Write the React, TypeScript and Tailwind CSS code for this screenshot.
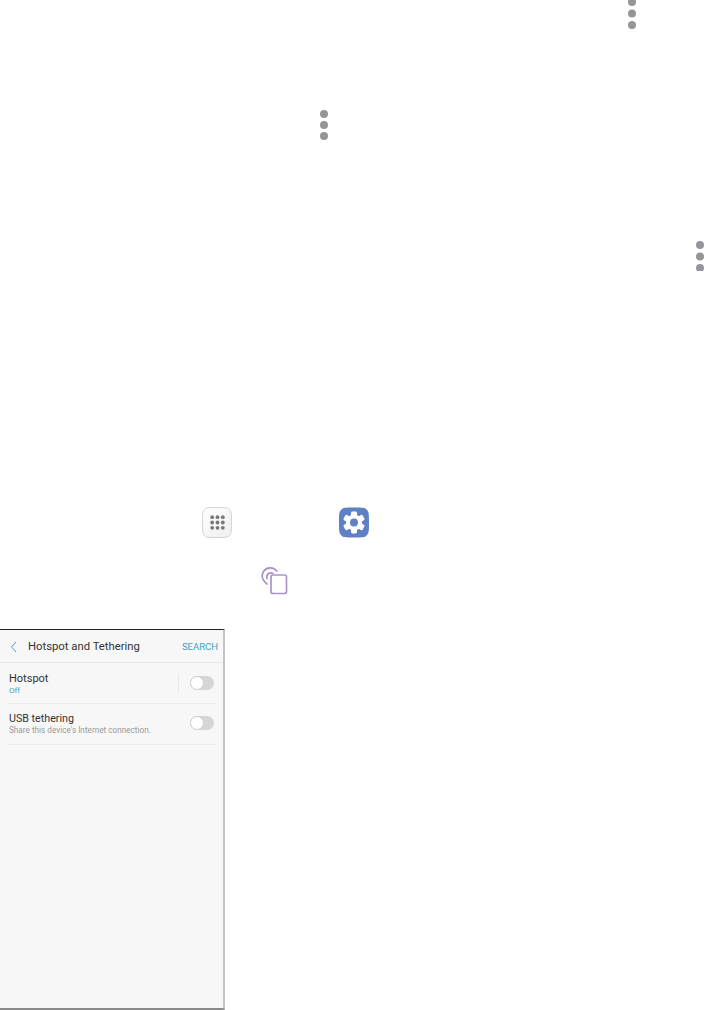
import React from "react";

const Dots = ({ cy }: { cy: number[] }) => (
  <svg width="12" height={Math.ceil(cy[2] + 5)} viewBox={`0 0 12 ${Math.ceil(cy[2] + 5)}`} className="block">
    {cy.map((y) => (
      <circle key={y} cx="6" cy={y} r="4" fill="#939598" />
    ))}
  </svg>
);

const AppsIcon = () => (
  <svg width="30" height="31" viewBox="0 0 30 31" className="block">
    <defs>
      <linearGradient id="appsBg" x1="0" y1="0" x2="1" y2="1">
        <stop offset="0" stopColor="#ffffff" />
        <stop offset="1" stopColor="#eeeeee" />
      </linearGradient>
    </defs>
    <path
      d="M15 0.5 C24 0.5 26 0.5 27.5 2.5 C29.5 4.5 29.5 7 29.5 15.5 C29.5 24 29.5 26.5 27.5 28.5 C26 30.5 24 30.5 15 30.5 C6 30.5 4 30.5 2.5 28.5 C0.5 26.5 0.5 24 0.5 15.5 C0.5 7 0.5 4.5 2.5 2.5 C4 0.5 6 0.5 15 0.5 Z"
      fill="url(#appsBg)"
      stroke="#c8c8c8"
      strokeWidth="0.8"
    />
    {[-5.3, 0, 5.3].map((y) =>
      [-5.3, 0, 5.3].map((x) => <circle key={`${x}-${y}`} cx={15.5 + x} cy={15.5 + y} r="1.9" fill="#77787b" />)
    )}
  </svg>
);

const GearIcon = () => (
  <svg width="30" height="31" viewBox="0 0 30 31" className="block">
    <path
      d="M15 0.5 C24 0.5 26 0.5 28 3 C30 5 30 8 30 15.5 C30 23 30 26 28 28 C26 30.5 24 30.5 15 30.5 C6 30.5 4 30.5 2 28 C0 26 0 23 0 15.5 C0 8 0 5 2 3 C4 0.5 6 0.5 15 0.5 Z"
      fill="#5f80c4"
    />
    <g transform="translate(15 15.5)">
      {[0, 60, 120, 180, 240, 300].map((a) => (
        <rect key={a} x="-3" y="-11" width="6" height="6" rx="1.4" fill="#ffffff" transform={`rotate(${a})`} />
      ))}
      <circle r="8" fill="#ffffff" />
      <circle r="4" fill="#5f80c4" />
    </g>
  </svg>
);

const TetherIcon = () => (
  <svg width="28" height="29" viewBox="0 0 28 29" fill="none" stroke="#a993cf" strokeWidth="1.7" className="block">
    <rect x="11" y="9" width="15.5" height="18.5" rx="2" />
    <path d="M7 18 C2.5 14.5 1 10 3.5 5.5 C6.5 1 13 0.5 17 5" strokeLinecap="round" />
    <path d="M7 12.5 C6 8.5 9.5 5.5 13 7.5" strokeLinecap="round" />
  </svg>
);

const Toggle = () => (
  <div className="relative h-[14px] w-[24px] rounded-full bg-[#d6d6d6]">
    <div className="absolute left-0 top-0 h-[14px] w-[14px] rounded-full border border-[#d0d0d0] bg-white" />
  </div>
);

export default function App() {
  return (
    <div className="flex h-[1010px] w-[707px] flex-col overflow-hidden bg-white font-['Roboto',sans-serif]">
      <div className="pl-[626px]">
        <Dots cy={[2, 13.5, 25]} />
      </div>
      <div className="mt-[79px] pl-[318px]">
        <Dots cy={[5, 16, 27]} />
      </div>
      <div className="mt-[100px] pl-[694px]">
        <svg width="12" height="30" viewBox="0 0 12 30" className="block">
          <circle cx="6" cy="4" r="4" fill="#939598" />
          <circle cx="6" cy="15.5" r="4" fill="#939598" />
          <circle cx="6" cy="27" r="4" fill="#939598" />
        </svg>
      </div>

      <div className="mt-[236px] flex items-center pl-[202px]">
        <AppsIcon />
        <div className="ml-[107px]">
          <GearIcon />
        </div>
      </div>
      <div className="mt-[28px] pl-[260px]">
        <TetherIcon />
      </div>

      <div className="mt-[34px] flex h-[381px] w-[225px] flex-col border-t border-r-2 border-b-2 border-t-[#222222] border-r-[#c4c4c4] border-b-[#8a8a8a] bg-[#f7f7f7]">
        <div className="flex h-[33px] items-center justify-between border-b border-[#e6e6e6] pt-[1px] pr-[5px] pl-[10px]">
          <div className="flex items-center">
            <svg width="8" height="12" viewBox="0 0 8 12" fill="none" stroke="#4aa8c4" strokeWidth="1" className="block">
              <path d="M6 1 L1.5 6 L6 11" />
            </svg>
            <span className="ml-[10px] text-[11.3px] leading-none text-[#333333]">Hotspot and Tethering</span>
          </div>
          <span className="text-[9.5px] leading-none text-[#3fa3c2]">SEARCH</span>
        </div>
        <div className="mx-[7px] flex h-[41px] items-center justify-between border-b border-[#ececec] pr-[2px] pl-[2px]">
          <div className="pt-[1px]">
            <div className="text-[11px] leading-[13px] text-[#333333]">Hotspot</div>
            <div className="text-[8px] leading-[11px] text-[#3fa3c2]">Off</div>
          </div>
          <div className="flex items-center">
            <div className="mr-[11px] h-[18px] w-px bg-[#e8e8e8]" />
            <Toggle />
          </div>
        </div>
        <div className="mx-[7px] flex h-[41px] items-center justify-between border-b border-[#ececec] pr-[2px] pl-[2px]">
          <div>
            <div className="text-[10.7px] leading-[13px] text-[#333333]">USB tethering</div>
            <div className="text-[8.2px] leading-[11px] text-[#9a9a9a]">Share this device's Internet connection.</div>
          </div>
          <div className="mb-[2px]">
            <Toggle />
          </div>
        </div>
      </div>
    </div>
  );
}
